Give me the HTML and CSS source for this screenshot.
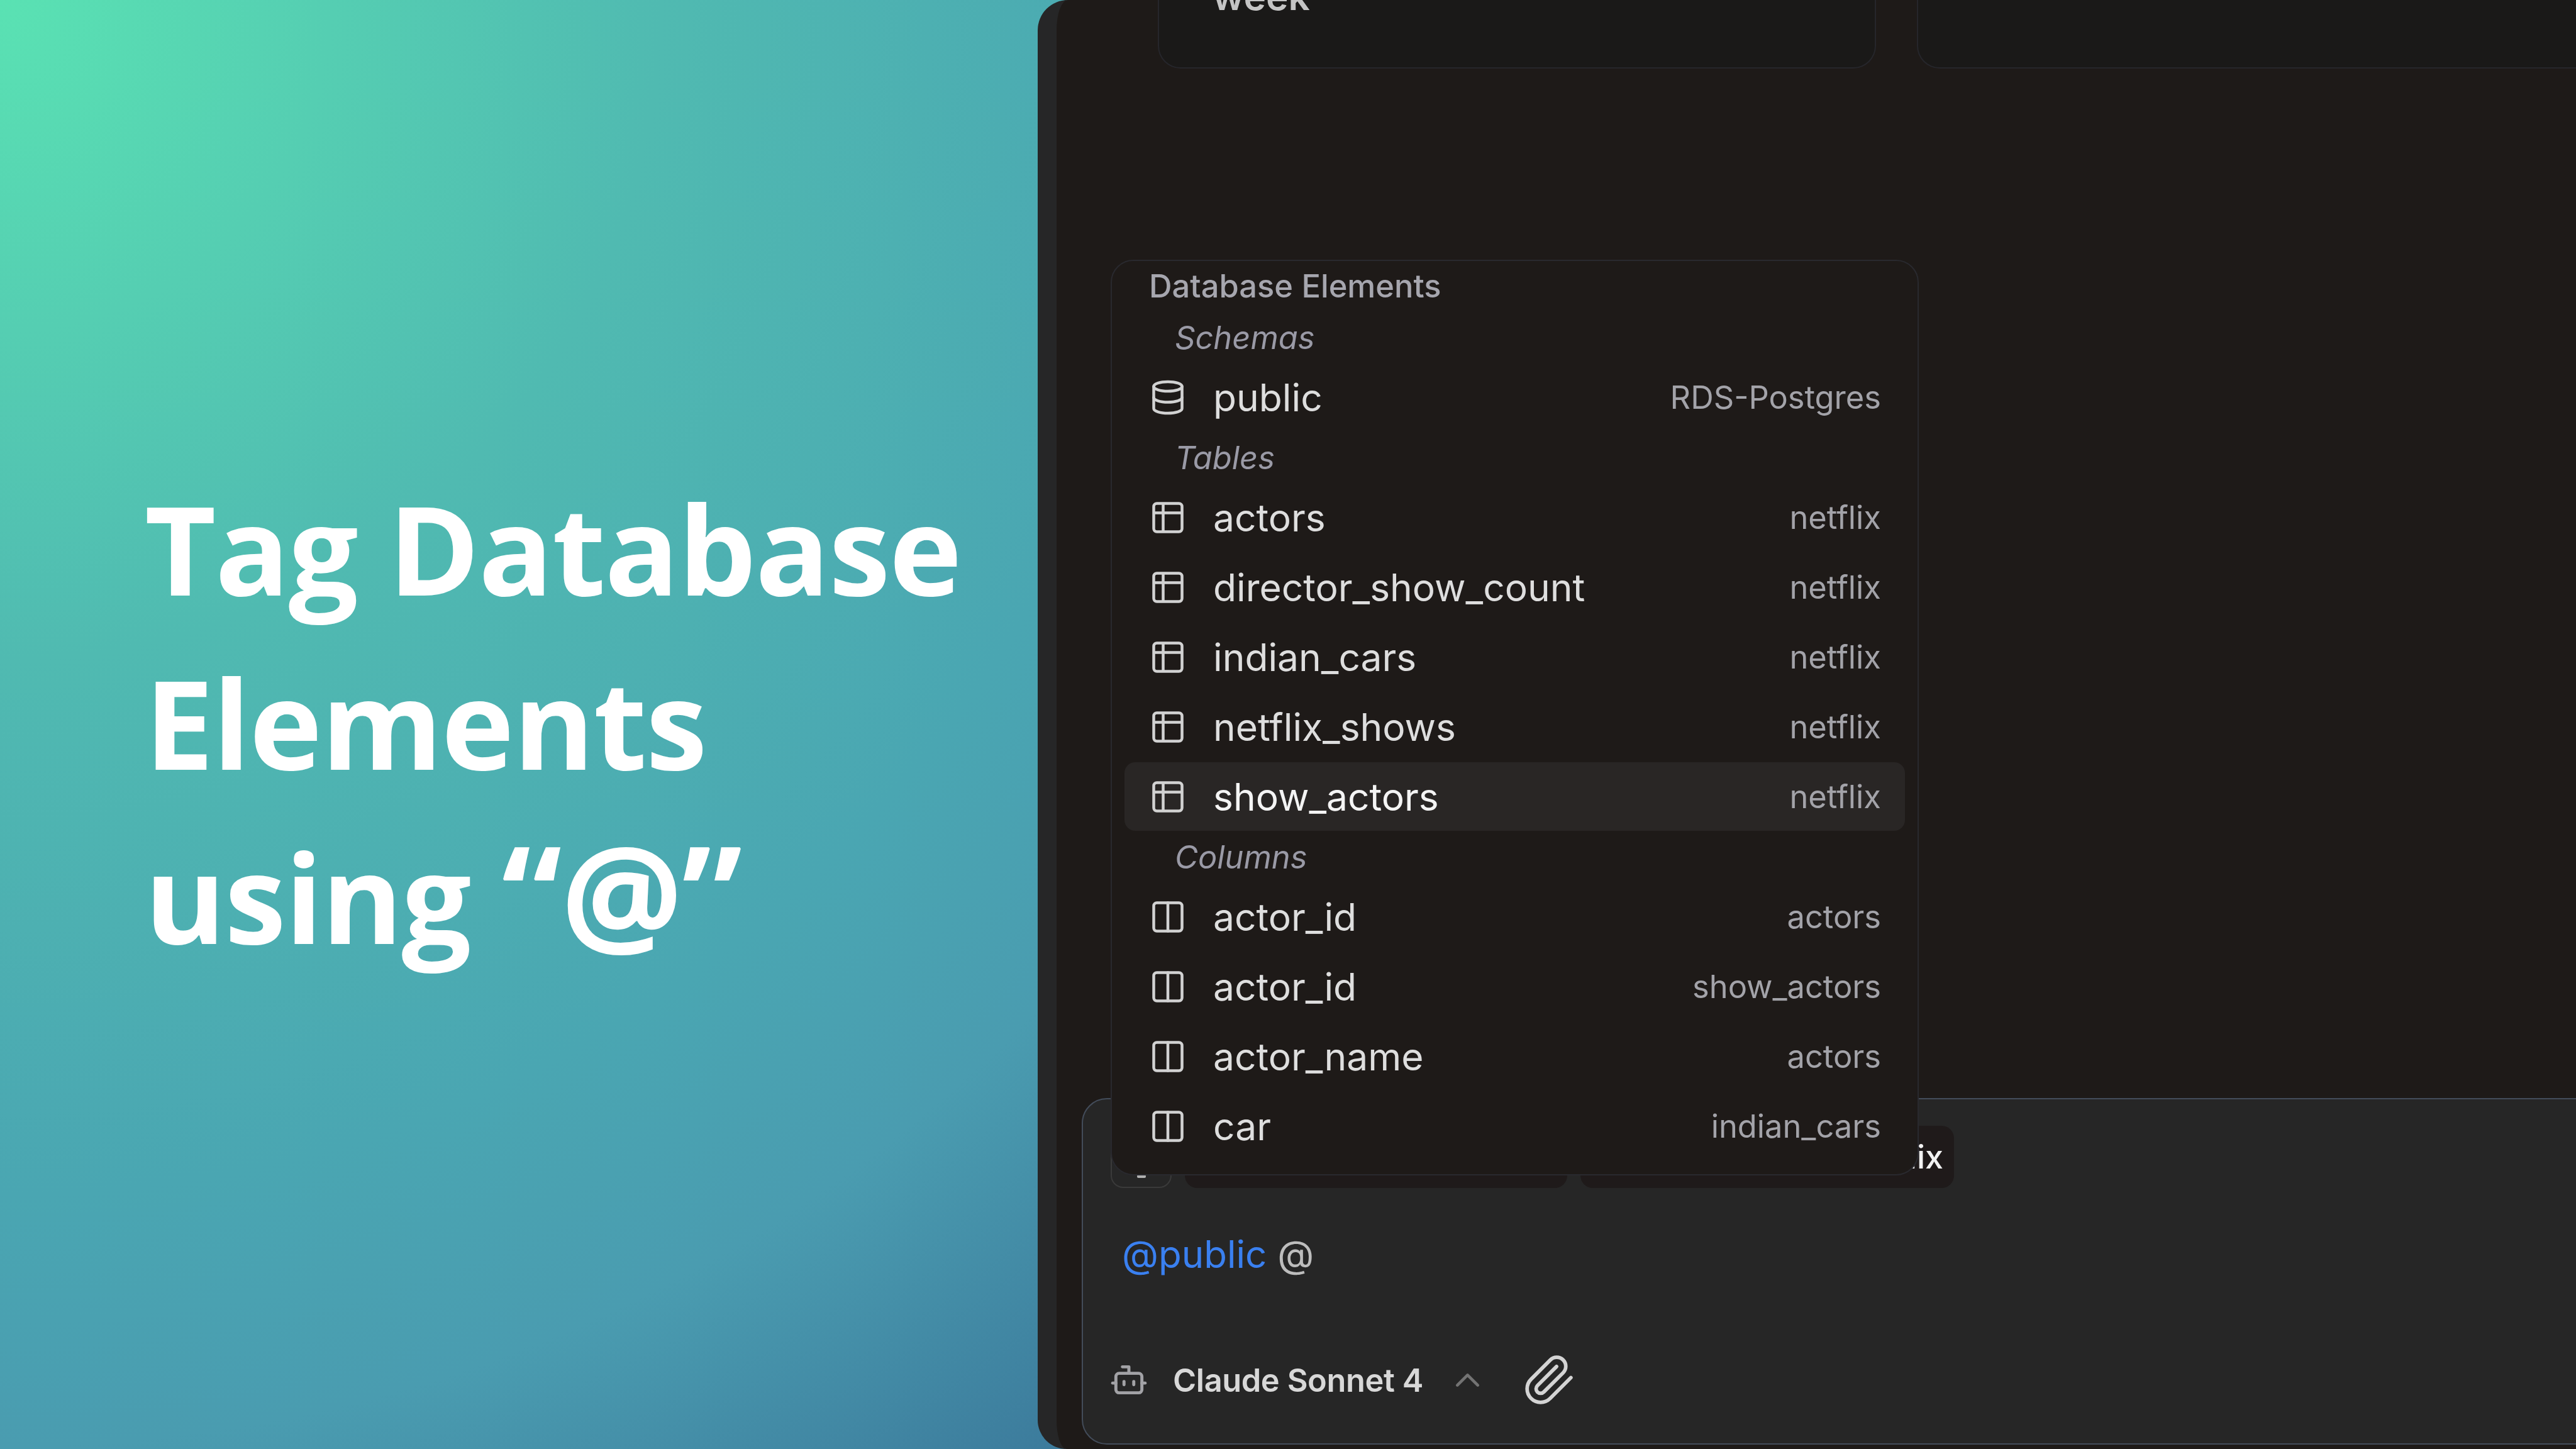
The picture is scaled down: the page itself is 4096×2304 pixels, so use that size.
FILE: index.html
```html
<!DOCTYPE html>
<html lang="en">
<head>
<meta charset="utf-8">
<title>Tag Database Elements</title>
<link rel="stylesheet" href="styles.css">
</head>
<body>
<svg class="sprite" width="0" height="0" aria-hidden="true">
  <symbol id="i-db" viewBox="0 0 24 24"><ellipse cx="12" cy="5" rx="9" ry="3"/><path d="M3 5V19A9 3 0 0 0 21 19V5"/><path d="M3 12A9 3 0 0 0 21 12"/></symbol>
  <symbol id="i-table" viewBox="0 0 24 24"><path d="M9 3H5a2 2 0 0 0-2 2v4m6-6h10a2 2 0 0 1 2 2v4M9 3v18m0 0h10a2 2 0 0 0 2-2V9M9 21H5a2 2 0 0 1-2-2V9m0 0h18"/></symbol>
  <symbol id="i-col" viewBox="0 0 24 24"><rect x="3" y="3" width="18" height="18" rx="2"/><path d="M12 3v18"/></symbol>
</svg>
<main class="stage">
  <section class="hero">
    <h1 class="title">Tag Database<br>Elements<br>using <span class="quote">“@”</span></h1>
  </section>
  <section class="panel">
    <div class="cards">
      <div class="card card-a"><span class="card-text">week</span></div>
      <div class="card card-b"></div>
    </div>

    <div class="composer">
      <div class="chips">
        <div class="chip chip-icon"><span class="chip-dot"></span></div>
        <div class="chip chip-wide"></div>
        <div class="chip chip-name">netflix</div>
      </div>
      <div class="message"><span class="mention">@public</span> @</div>
      <div class="footer">
        <svg class="ic-bot" viewBox="0 0 24 24"><path d="M12 8V4H8"/><rect width="16" height="12" x="4" y="8" rx="2"/><path d="M2 14h2"/><path d="M20 14h2"/><path d="M15 13v2"/><path d="M9 13v2"/></svg>
        <span class="model">Claude Sonnet 4</span>
        <svg class="ic-chev" viewBox="0 0 24 24"><path d="m18 15-6-6-6 6"/></svg>
        <svg class="ic-clip" viewBox="0 0 24 24"><path d="m21.44 11.05-9.19 9.19a6 6 0 0 1-8.49-8.49l8.57-8.57A4 4 0 1 1 18 8.84l-8.59 8.57a2 2 0 0 1-2.83-2.83l8.49-8.48"/></svg>
      </div>
    </div>

    <div class="popup">
      <div class="pop-title">Database Elements</div>
      <div class="pop-group">Schemas</div>
      <div class="row"><svg class="ic"><use href="#i-db"/></svg><span class="name">public</span><span class="meta">RDS-Postgres</span></div>
      <div class="pop-group">Tables</div>
      <div class="row"><svg class="ic"><use href="#i-table"/></svg><span class="name">actors</span><span class="meta">netflix</span></div>
      <div class="row"><svg class="ic"><use href="#i-table"/></svg><span class="name">director_show_count</span><span class="meta">netflix</span></div>
      <div class="row"><svg class="ic"><use href="#i-table"/></svg><span class="name">indian_cars</span><span class="meta">netflix</span></div>
      <div class="row"><svg class="ic"><use href="#i-table"/></svg><span class="name">netflix_shows</span><span class="meta">netflix</span></div>
      <div class="row row-active"><svg class="ic"><use href="#i-table"/></svg><span class="name">show_actors</span><span class="meta">netflix</span></div>
      <div class="pop-group">Columns</div>
      <div class="row"><svg class="ic"><use href="#i-col"/></svg><span class="name">actor_id</span><span class="meta">actors</span></div>
      <div class="row"><svg class="ic"><use href="#i-col"/></svg><span class="name">actor_id</span><span class="meta">show_actors</span></div>
      <div class="row"><svg class="ic"><use href="#i-col"/></svg><span class="name">actor_name</span><span class="meta">actors</span></div>
      <div class="row"><svg class="ic"><use href="#i-col"/></svg><span class="name">car</span><span class="meta">indian_cars</span></div>
    </div>
  </section>
</main>
</body>
</html>
```
FILE: styles.css
```css
* { box-sizing: border-box; }
html, body { margin: 0; padding: 0; width: 4096px; height: 2304px; overflow: hidden; }
body { font-family: "Inter", "Liberation Sans", sans-serif; }
.sprite { position: absolute; }

.stage {
  width: 4096px; height: 2304px; display: flex; overflow: hidden;
  background: radial-gradient(circle at 0 0, #5ae2b3 0, #50bab1 1050px, #4aa6b2 1900px, #4a9cb0 2300px, #3c7b9c 2850px);
}

.hero { width: 1650px; flex: none; padding: 733px 0 0 230px; }
.title {
  margin: 0; font-family: "Open Sans", "Liberation Sans", sans-serif;
  font-weight: 700; font-size: 196px; line-height: 277px; color: #fff;
  letter-spacing: -1.5px;
}
.quote { font-size: 216px; line-height: 1; }

.panel {
  position: relative; flex: 1; display: flex; flex-direction: column; overflow: hidden;
  background: #1e1a18; border-left: 30px solid #262627;
  border-radius: 48px 0 0 46px;
}

.cards { display: flex; gap: 65px; height: 109px; padding-left: 161px; margin-right: -60px; flex: none; }
.card {
  height: 109px; background: #1a1918; border: 2px solid #26262b; border-top: 0;
  border-radius: 0 0 36px 36px; overflow: hidden;
}
.card-a { width: 1142px; flex: none; padding-left: 85px; }
.card-b { flex: 1; }
.card-text { display: block; margin-top: -36px; font-size: 60px; line-height: 60px; font-weight: 600; color: #c4c4c4; }

.composer {
  margin: auto -60px 7px 40px; height: 551px; flex: none;
  background: #262626; border: 2px solid #434c5a; border-radius: 40px;
  padding: 42px 0 0 42px;
}
.chips { display: flex; gap: 21px; height: 99px; padding-left: 2px; }
.chip { height: 99px; background: #1f1a1a; border-radius: 20px; }
.chip-icon { width: 97px; background: #262626; border: 2px solid #3a3a3a; display: flex; justify-content: center; align-items: flex-end; padding-bottom: 14px; }
.chip-dot { width: 14px; height: 5px; background: #b0b0b0; border-radius: 2px; }
.chip-wide { width: 608px; }
.chip-name {
  width: 594px; padding-right: 17px; text-align: right;
  font-size: 52px; line-height: 99px; font-weight: 500; color: #f2f2f2;
}

.message { margin: 66px 0 0 20px; height: 80px; font-size: 60px; line-height: 78px; color: #bdbdbd; }
.mention { color: #3a80f0; }

.footer { display: flex; align-items: center; margin: 119px 0 0 0; height: 80px; }
.footer svg { flex: none; fill: none; stroke-linecap: round; stroke-linejoin: round; }
.ic-bot { width: 62px; height: 62px; stroke: #a2a2a6; stroke-width: 1.9; }
.model { margin-left: 39px; font-size: 50.5px; font-weight: 600; letter-spacing: -0.4px; color: #d8d8d8; }
.ic-chev { width: 65px; height: 65px; margin-left: 38px; stroke: #737373; stroke-width: 1.7; }
.ic-clip { width: 86px; height: 86px; margin-left: 55px; stroke: #d4d4d4; stroke-width: 1.6; }

.popup {
  position: absolute; left: 86px; top: 413px; width: 1285px; height: 1456px;
  display: flex; flex-direction: column;
  background: #1e1a18; border: 2px solid #29292e; border-radius: 36px;
  padding: 1px 20px 0;
}
.pop-title, .pop-group, .row { flex: none; }
.pop-title { height: 80px; margin-left: 39px; font-size: 50.6px; line-height: 78px; font-weight: 500; color: #a6a6ae; }
.pop-group { height: 80px; margin-left: 80px; font-size: 50.6px; line-height: 82px; font-style: italic; color: #9a9aa6; }

.row { display: flex; align-items: center; height: 109px; margin: 1px 0; padding: 0 38px 0 39px; border-radius: 17px; }
.row-active { background: #292625; }
.ic { width: 60px; height: 60px; flex: none; fill: none; stroke: #d2d2d2; stroke-width: 1.8; stroke-linecap: round; stroke-linejoin: round; }
.name { margin-left: 42px; font-size: 60.5px; color: #dedede; }
.row-active .name { color: #f4f4f4; }
.meta { margin-left: auto; font-size: 50.6px; color: #a3a3a9; }
```
